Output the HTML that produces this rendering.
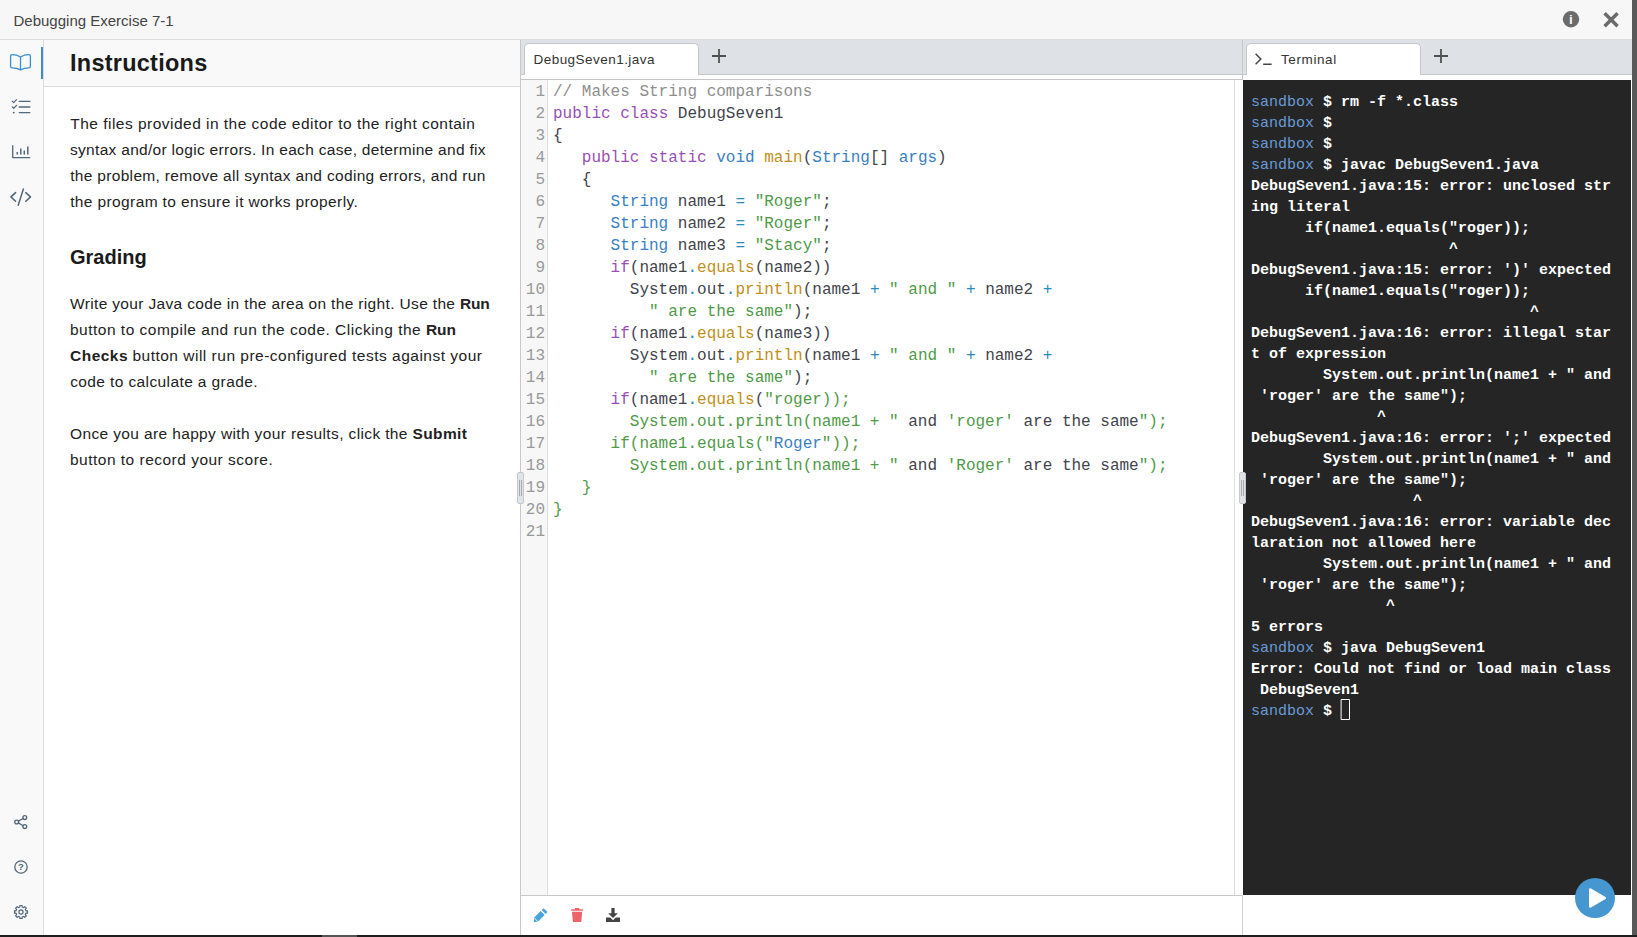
<!DOCTYPE html>
<html lang="en">
<head>
<meta charset="utf-8">
<title>Debugging Exercise 7-1</title>
<style>
*{box-sizing:border-box;margin:0;padding:0}
html,body{width:1637px;height:937px;overflow:hidden;background:#fff}
body{position:relative;font-family:"Liberation Sans",sans-serif;color:#222}
.abs{position:absolute}
#hdr{left:0;top:0;width:1632px;height:40px;background:#f7f7f7;border-bottom:1px solid #dcdcdc}
#hdr .t{position:absolute;left:13.5px;top:12px;font-size:15px;line-height:18px;color:#444}
#side{left:0;top:40px;width:44px;height:895px;background:#f9f9f9;border-right:1px solid #dcdcdc}
#act{left:41px;top:47px;width:2px;height:32px;background:#3b8fd0}
#ihead{left:44px;top:40px;width:476px;height:47px;background:#f9f9f9;border-bottom:1px solid #dcdcdc}
#ihead h1{position:absolute;left:26px;top:8px;font-size:23.5px;line-height:30px;font-weight:bold;color:#1a1a1a;white-space:nowrap;letter-spacing:.25px}
#ibody{left:44px;top:87px;width:476px;height:848px;background:#fff}
#ibody .pl{position:absolute;left:0;width:476px;height:26px;font-size:15.5px;line-height:26px;color:#222;white-space:pre}
#ibody .pl span,#ibody .pl b{position:absolute;top:0}
#ibody h2{position:absolute;left:26px;top:157px;font-size:20px;line-height:26px;font-weight:bold;color:#1a1a1a}
#lsplit{left:520px;top:40px;width:1px;height:895px;background:#c8c8c8}
.hand{position:absolute;width:7px;height:32px;top:472px;background:#e0e3e8;border:1px solid #c6c8cc;border-radius:2px}
.hand i{position:absolute;top:7px;width:1px;height:16px;background:#aaa}
#etabs{left:521px;top:40px;width:721px;height:35px;background:#dee1e6;border-bottom:1px solid #c6c6c6}
.tab{position:absolute;top:43px;height:32px;background:#fff;border:1px solid #c6c6c6;border-bottom:none;border-radius:5px 5px 0 0;font-size:13.5px;line-height:18px;color:#333;white-space:nowrap}
.tab span{position:absolute;top:7px}
#estrip{left:521px;top:75px;width:721px;height:5px;background:#fff;border-bottom:1px solid #c6c6c6}
#vsep{left:1242px;top:40px;width:1px;height:40px;background:#c6c6c6}
#gut{left:521px;top:80px;width:27px;height:815px;background:#f7f7f7;border-right:1px solid #ddd}
#code{left:521px;top:80px;width:713px;height:815px;font-family:"Liberation Mono",monospace;font-size:16px;line-height:22px;white-space:pre;color:#42444c;overflow:hidden}
#code .ln{position:absolute;left:0;width:24px;text-align:right;color:#999}
#code .cl{position:absolute;left:32px}
.k{color:#9a4fb5}.ty{color:#3a7fc4}.fn{color:#c18f1a}.s{color:#509a48}.c{color:#8e8e8e}.o{color:#2a8ab8}
#ebar{left:521px;top:895px;width:721px;height:40px;background:#fff;border-top:1px solid #c8c8c8}
#rline{left:1234px;top:80px;width:1px;height:815px;background:#ddd}
#ttabs{left:1243px;top:40px;width:389px;height:35px;background:#dee1e6;border-bottom:1px solid #c6c6c6}
#tstrip{left:1243px;top:75px;width:389px;height:5px;background:#fff}
#term{left:1243px;top:80px;width:388px;height:815px;background:#252525;color:#fff;font-family:"Liberation Mono",monospace;font-size:15px;line-height:21px;font-weight:bold;white-space:pre}
#term .tl{position:absolute;left:8px}
#term .b{color:#6a9bd6;font-weight:normal}
#tbar{left:1243px;top:895px;width:389px;height:40px;background:#fff}
#vsep2{left:1242px;top:895px;width:1px;height:40px;background:#d0d0d0}
#rbar{left:1632px;top:0;width:5px;height:937px;background:#595959}
#bbar{left:0;top:935px;width:1637px;height:2px;background:#1e1e1e}
#bbar i{position:absolute;left:322px;top:0;width:35px;height:2px;background:#555}
svg{overflow:visible}
</style>
</head>
<body>
<div id="hdr" class="abs"><div class="t">Debugging Exercise 7-1</div></div>
<div id="side" class="abs"></div>
<div id="act" class="abs"></div>
<div id="ihead" class="abs"><h1>Instructions</h1></div>
<div id="ibody" class="abs">
<div class="pl" style="top:23.5px"><span style="left:26.3px;letter-spacing:0.477px">The files provided in the code editor to the right contain</span></div>
<div class="pl" style="top:49.5px"><span style="left:26.0px;letter-spacing:0.303px">syntax and/or logic errors. In each case, determine and fix</span></div>
<div class="pl" style="top:75.5px"><span style="left:26.2px;letter-spacing:0.320px">the problem, remove all syntax and coding errors, and run</span></div>
<div class="pl" style="top:101.5px"><span style="left:26.2px;letter-spacing:0.379px">the program to ensure it works properly.</span></div>
<div class="pl" style="top:203.5px"><span style="left:26.0px;letter-spacing:0.344px">Write your Java code in the area on the right. Use the </span><b style="left:416.0px;letter-spacing:-0.170px">Run</b></div>
<div class="pl" style="top:229.5px"><span style="left:26.0px;letter-spacing:0.495px">button to compile and run the code. Clicking the </span><b style="left:382.0px;letter-spacing:-0.120px">Run</b></div>
<div class="pl" style="top:255.5px"><b style="left:26.0px;letter-spacing:0.489px">Checks</b><span style="left:83.6px;letter-spacing:0.498px"> button will run pre-configured tests against your</span></div>
<div class="pl" style="top:281.5px"><span style="left:26.2px;letter-spacing:0.391px">code to calculate a grade.</span></div>
<div class="pl" style="top:333.5px"><span style="left:26.0px;letter-spacing:0.369px">Once you are happy with your results, click the </span><b style="left:368.5px;letter-spacing:0.374px">Submit</b></div>
<div class="pl" style="top:359.5px"><span style="left:26.0px;letter-spacing:0.487px">button to record your score.</span></div>
<h2>Grading</h2>
</div>
<div id="lsplit" class="abs"></div>
<div id="etabs" class="abs"></div>
<div id="estrip" class="abs"></div>
<div id="ttabs" class="abs"></div>
<div id="tstrip" class="abs"></div>
<div id="vsep" class="abs"></div>
<div class="tab" style="left:524px;width:175px"><span style="left:8.500px;letter-spacing:0.46px">DebugSeven1.java</span></div>
<div class="tab" style="left:1246px;width:175px"><span style="left:34px;letter-spacing:0.598px">Terminal</span></div>
<div id="gut" class="abs"></div>
<div id="code" class="abs">
<div class="ln" style="top:1px">1</div>
<div class="cl" style="top:1px"><span class="c">// Makes String comparisons</span></div>
<div class="ln" style="top:23px">2</div>
<div class="cl" style="top:23px"><span class="k">public</span> <span class="k">class</span> DebugSeven1</div>
<div class="ln" style="top:45px">3</div>
<div class="cl" style="top:45px">{</div>
<div class="ln" style="top:67px">4</div>
<div class="cl" style="top:67px">   <span class="k">public</span> <span class="k">static</span> <span class="ty">void</span> <span class="fn">main</span>(<span class="ty">String</span>[] <span class="ty">args</span>)</div>
<div class="ln" style="top:89px">5</div>
<div class="cl" style="top:89px">   {</div>
<div class="ln" style="top:111px">6</div>
<div class="cl" style="top:111px">      <span class="ty">String</span> name1 <span class="o">=</span> <span class="s">"Roger"</span>;</div>
<div class="ln" style="top:133px">7</div>
<div class="cl" style="top:133px">      <span class="ty">String</span> name2 <span class="o">=</span> <span class="s">"Roger"</span>;</div>
<div class="ln" style="top:155px">8</div>
<div class="cl" style="top:155px">      <span class="ty">String</span> name3 <span class="o">=</span> <span class="s">"Stacy"</span>;</div>
<div class="ln" style="top:177px">9</div>
<div class="cl" style="top:177px">      <span class="k">if</span>(name1<span class="o">.</span><span class="fn">equals</span>(name2))</div>
<div class="ln" style="top:199px">10</div>
<div class="cl" style="top:199px">        System<span class="o">.</span>out<span class="o">.</span><span class="fn">println</span>(name1 <span class="o">+</span> <span class="s">" and "</span> <span class="o">+</span> name2 <span class="o">+</span></div>
<div class="ln" style="top:221px">11</div>
<div class="cl" style="top:221px">          <span class="s">" are the same"</span>);</div>
<div class="ln" style="top:243px">12</div>
<div class="cl" style="top:243px">      <span class="k">if</span>(name1<span class="o">.</span><span class="fn">equals</span>(name3))</div>
<div class="ln" style="top:265px">13</div>
<div class="cl" style="top:265px">        System<span class="o">.</span>out<span class="o">.</span><span class="fn">println</span>(name1 <span class="o">+</span> <span class="s">" and "</span> <span class="o">+</span> name2 <span class="o">+</span></div>
<div class="ln" style="top:287px">14</div>
<div class="cl" style="top:287px">          <span class="s">" are the same"</span>);</div>
<div class="ln" style="top:309px">15</div>
<div class="cl" style="top:309px">      <span class="k">if</span>(name1<span class="o">.</span><span class="fn">equals</span>(<span class="s">"roger));</span></div>
<div class="ln" style="top:331px">16</div>
<div class="cl" style="top:331px"><span class="s">        System.out.println(name1 + "</span> and <span class="s">'roger'</span> are the same<span class="s">");</span></div>
<div class="ln" style="top:353px">17</div>
<div class="cl" style="top:353px"><span class="s">      if(name1.equals("</span><span class="ty">Roger</span><span class="s">"));</span></div>
<div class="ln" style="top:375px">18</div>
<div class="cl" style="top:375px"><span class="s">        System.out.println(name1 + "</span> and <span class="s">'Roger'</span> are the same<span class="s">");</span></div>
<div class="ln" style="top:397px">19</div>
<div class="cl" style="top:397px"><span class="s">   }</span></div>
<div class="ln" style="top:419px">20</div>
<div class="cl" style="top:419px"><span class="s">}</span></div>
<div class="ln" style="top:441px">21</div>
</div>
<div id="rline" class="abs"></div>
<div id="term" class="abs">
<div class="tl" style="top:12px"><span class="b">sandbox</span> $ rm -f *.class</div>
<div class="tl" style="top:33px"><span class="b">sandbox</span> $ </div>
<div class="tl" style="top:54px"><span class="b">sandbox</span> $ </div>
<div class="tl" style="top:75px"><span class="b">sandbox</span> $ javac DebugSeven1.java</div>
<div class="tl" style="top:96px">DebugSeven1.java:15: error: unclosed str</div>
<div class="tl" style="top:117px">ing literal</div>
<div class="tl" style="top:138px">      if(name1.equals("roger));</div>
<div class="tl" style="top:159px">                      ^</div>
<div class="tl" style="top:180px">DebugSeven1.java:15: error: ')' expected</div>
<div class="tl" style="top:201px">      if(name1.equals("roger));</div>
<div class="tl" style="top:222px">                               ^</div>
<div class="tl" style="top:243px">DebugSeven1.java:16: error: illegal star</div>
<div class="tl" style="top:264px">t of expression</div>
<div class="tl" style="top:285px">        System.out.println(name1 + " and</div>
<div class="tl" style="top:306px"> 'roger' are the same");</div>
<div class="tl" style="top:327px">              ^</div>
<div class="tl" style="top:348px">DebugSeven1.java:16: error: ';' expected</div>
<div class="tl" style="top:369px">        System.out.println(name1 + " and</div>
<div class="tl" style="top:390px"> 'roger' are the same");</div>
<div class="tl" style="top:411px">                  ^</div>
<div class="tl" style="top:432px">DebugSeven1.java:16: error: variable dec</div>
<div class="tl" style="top:453px">laration not allowed here</div>
<div class="tl" style="top:474px">        System.out.println(name1 + " and</div>
<div class="tl" style="top:495px"> 'roger' are the same");</div>
<div class="tl" style="top:516px">               ^</div>
<div class="tl" style="top:537px">5 errors</div>
<div class="tl" style="top:558px"><span class="b">sandbox</span> $ java DebugSeven1</div>
<div class="tl" style="top:579px">Error: Could not find or load main class</div>
<div class="tl" style="top:600px"> DebugSeven1</div>
<div class="tl" style="top:621px"><span class="b">sandbox</span> $ </div>
</div>
<div id="ebar" class="abs"></div>
<div id="tbar" class="abs"></div>
<div id="vsep2" class="abs"></div>
<div class="hand" style="left:517px"><i style="left:1px"></i><i style="left:3px"></i></div>
<div class="hand" style="left:1239px"><i style="left:1px"></i><i style="left:3px"></i></div>
<div id="rbar" class="abs"></div>
<div id="bbar" class="abs"><i></i></div>

<svg class="abs" style="left:0;top:0" width="1637" height="937" viewBox="0 0 1637 937" fill="none" stroke-linecap="round" stroke-linejoin="round">
<!-- book -->
<path d="M20.5 57 C18 55.4 14.5 54.7 12 54.7 Q10.6 54.7 10.6 56.1 V66.4 Q10.6 67.8 12 67.8 C14.5 67.8 18 68.4 20.5 69.9 C23 68.4 26.5 67.8 29 67.8 Q30.4 67.8 30.4 66.4 V56.1 Q30.4 54.7 29 54.7 C26.5 54.7 23 55.4 20.5 57 Z M20.5 57 V69.9" stroke="#3b8fd0" stroke-width="1.3"/>
<!-- checklist -->
<g stroke="#52677a" stroke-width="1.4"><path d="M19.3 101.4H29.8M19.3 107H29.8M19.3 112.6H29.8"/><path d="M12.2 101.2l1.5 1.5 2.8-3M12.2 106.8l1.5 1.5 2.8-3" stroke-width="1.2"/><path d="M13.6 112.6h.2" stroke-width="1.8"/></g>
<!-- chart -->
<g stroke="#52677a" stroke-width="1.3"><path d="M12.7 145.6V157.6H29.8"/><path d="M17.3 151.9V154.6M20.8 148.4V154.6M24.3 150.4V154.6M27.8 146.4V154.6" stroke-width="1.5" stroke-linecap="butt"/></g>
<!-- code -->
<g stroke="#52677a" stroke-width="1.5"><path d="M15.6 192.6L10.9 196.9L15.6 201.2M25.8 192.6L30.5 196.9L25.8 201.2M23.4 189L18.2 205.2"/></g>
<!-- share -->
<g stroke="#52677a" stroke-width="1.3"><circle cx="24.8" cy="817.6" r="1.9"/><circle cx="16.7" cy="822" r="1.9"/><circle cx="24.8" cy="826.6" r="1.9"/><path d="M18.4 821.1L23.1 818.5M18.4 822.9L23.1 825.7"/></g>
<!-- help -->
<circle cx="21" cy="867" r="6.2" stroke="#52677a" stroke-width="1.3"/>
<text x="21" y="870.4" text-anchor="middle" font-family="Liberation Sans, sans-serif" font-weight="bold" font-size="9.5" fill="#52677a" stroke="none">?</text>
<!-- gear -->
<path d="M27.50 910.87 L27.50 913.13 L25.96 913.19 L25.35 914.66 L26.40 915.80 L24.80 917.40 L23.66 916.35 L22.19 916.96 L22.13 918.50 L19.87 918.50 L19.81 916.96 L18.34 916.35 L17.20 917.40 L15.60 915.80 L16.65 914.66 L16.04 913.19 L14.50 913.13 L14.50 910.87 L16.04 910.81 L16.65 909.34 L15.60 908.20 L17.20 906.60 L18.34 907.65 L19.81 907.04 L19.87 905.50 L22.13 905.50 L22.19 907.04 L23.66 907.65 L24.80 906.60 L26.40 908.20 L25.35 909.34 L25.96 910.81Z" stroke="#52677a" stroke-width="1.2"/><circle cx="21" cy="912" r="2.1" stroke="#52677a" stroke-width="1.2"/>
<!-- info -->
<circle cx="1571" cy="19.2" r="8.2" fill="#6b6b6b"/>
<text x="1571" y="24.200" text-anchor="middle" font-family="Liberation Sans, sans-serif" font-weight="bold" font-size="13.500" fill="#f7f7f7" stroke="none">i</text>
<!-- close -->
<path d="M1604.6 13.2L1617.6 26.2M1617.6 13.2L1604.6 26.2" stroke="#6b6b6b" stroke-width="3.5" stroke-linecap="butt"/>
<!-- plus editor / terminal -->
<path d="M712 56H726M719 49V63" stroke="#505050" stroke-width="1.8" stroke-linecap="butt"/>
<path d="M1434 56H1448M1441 49V63" stroke="#505050" stroke-width="1.8" stroke-linecap="butt"/>
<!-- terminal glyph -->
<path d="M1255.6 53.8L1260.8 59L1255.6 64.2M1263.2 64.2H1271.6" stroke="#444" stroke-width="1.5" stroke-linecap="butt" stroke-linejoin="miter"/>
<!-- pencil -->
<g fill="#4aa3df" stroke="none"><path d="M543.6 908.2l3.9 3.9-1.9 1.9-3.9-3.9zM540.8 911l3.9 3.9-6.6 6.6-4.3.8.4-4.7zM534.6 919.4l1.7 1.7-1.9.4z" /></g>
<path d="M534.6 918.3l2.8 2.8" stroke="#fff" stroke-width=".9"/>
<!-- trash -->
<g fill="#ee6368" stroke="none"><path d="M571.1 909.3h12v1.5h-12zM575 908h4.2v1.4H575zM572 911.7h10.2l-.8 9.2q-.1 1.2-1.3 1.2h-6q-1.2 0-1.3-1.2z"/></g>
<!-- download -->
<g fill="#444" stroke="none"><path d="M611.4 908h3.2v5.2h3.2l-4.8 4.9-4.8-4.900h3.2zM606 917.500h4.300l2.700 2.700 2.700-2.700h4.300v4.500h-14z"/></g>
<!-- play -->
<circle cx="1595" cy="898" r="20" fill="#4696cf"/>
<path d="M1590.300 889.500L1604.800 898L1590.300 906.500Z" fill="#fff" stroke="#fff" stroke-width="2.6" stroke-linejoin="round"/>
<!-- cursor -->
<rect x="1341.500" y="699.500" width="8" height="20" stroke="#fff" stroke-width="1"/>
</svg>

</body>
</html>
